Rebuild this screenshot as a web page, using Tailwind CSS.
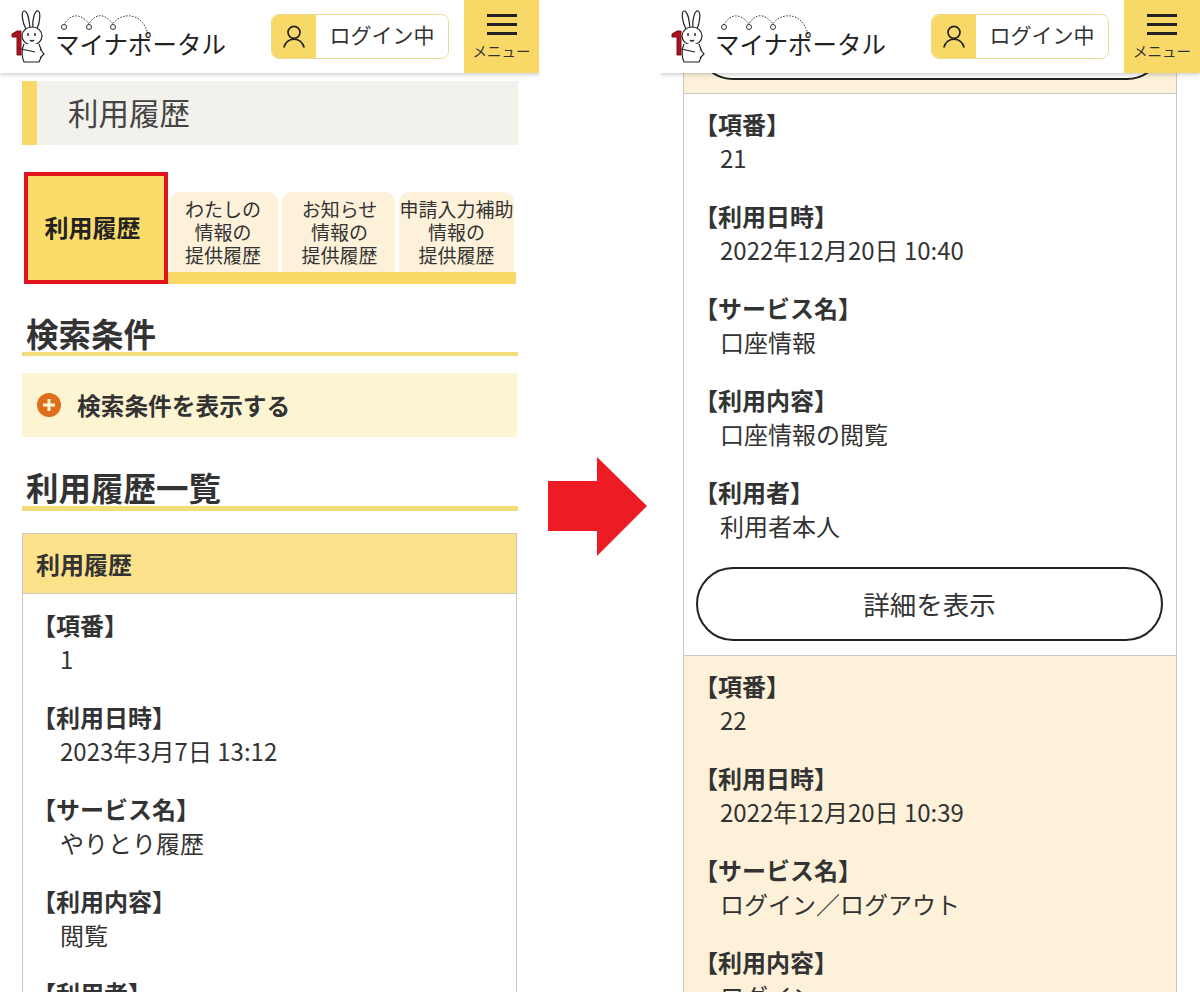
<!DOCTYPE html>
<html lang="ja">
<head>
  <meta charset="UTF-8">
  <title>マイナポータル 利用履歴</title>
  <meta name="viewport" content="width=device-width, initial-scale=1">
  <script src="https://cdn.jsdelivr.net/npm/@tailwindcss/browser@4"></script>
</head>
<body class="bg-white text-[#333] font-['Noto_Sans_CJK_JP','Noto_Sans',sans-serif]">
  <div class="flex h-[992px] w-[1200px] overflow-hidden">

    <!-- left phone -->
    <div class="w-[540px] h-[992px] shrink-0 flex flex-col overflow-hidden">
      <header class="relative z-10 h-[73px] shrink-0 flex bg-white shadow-[0_2px_4px_rgba(0,0,0,0.18)]">
        <svg class="ml-[10px] mt-[8px] shrink-0" width="38" height="56" viewBox="0 0 38 56" fill="#fff" stroke="#222" stroke-width="1.2">
          <path d="M16 21C12 14 11 3 14 3C18 3 19 11 20 20"/>
          <path d="M23 20C22 11 25 2 28 3C31 4 30 14 27 21"/>
          <ellipse cx="22" cy="28" rx="10" ry="9"/>
          <path d="M14 36C11 42 12 50 14 54L29 54C32 49 32 42 29 36"/>
          <path d="M11 41L25 44M30 41L34 46L30 50"/>
          <path d="M18 25V28M25 25V28" stroke-width="1.4"/>
          <path d="M20 32Q22 34 24 32" fill="none"/>
          <path d="M2 26L7 23L11 23L11 47L7 47L7 29L2 29Z" fill="#a8141f" stroke="#7a1018" stroke-width="1"/>
        </svg>
        <div class="relative w-[176px] ml-[9px] -translate-x-[2px] shrink-0">
          <svg class="absolute left-0 top-[14px]" width="100" height="30" viewBox="0 0 100 30" fill="none" stroke="#333">
            <path d="M9 11C15 -1 26 -1 34 10C40 -1 50 -1 58 10C64 -1 88 -4 93 21" stroke-dasharray="1.5 1.5"/>
            <circle cx="9" cy="13" r="2.5" fill="#fff"/>
            <circle cx="34" cy="13" r="2.5" fill="#fff"/>
            <circle cx="58" cy="13" r="2.5" fill="#fff"/>
          </svg>
          <div class="absolute left-0 top-[25px] text-[24.5px] leading-[38px] whitespace-nowrap text-[#222]">マイナポータル</div>
        </div>
        <div class="ml-[38px] mt-[14px] flex h-[45px] w-[178px] overflow-hidden rounded-[8px] border border-[#e6db8e] shrink-0">
          <div class="w-[44px] flex items-center justify-center bg-[#f8d968]">
            <svg width="24" height="25" viewBox="0 0 26 26" fill="none" stroke="#222" stroke-width="1.8">
              <circle cx="13" cy="8.5" r="6.5"/>
              <path d="M2 25C4 18 8 16 13 16C18 16 22 18 24 25"/>
            </svg>
          </div>
          <div class="flex-1 flex items-center justify-center bg-white pb-[3px] text-[21px] text-[#333]">ログイン中</div>
        </div>
        <div class="ml-[15px] w-[75px] flex flex-col items-center bg-[#f8d968] shrink-0">
          <div class="mt-[14px] h-[3px] w-[30px] bg-[#222]"></div>
          <div class="mt-[6px] h-[3px] w-[30px] bg-[#222]"></div>
          <div class="mt-[6px] h-[3px] w-[30px] bg-[#222]"></div>
          <div class="mt-[7px] text-[14.5px] leading-[18px] whitespace-nowrap">メニュー</div>
        </div>
      </header>

      <main class="px-[22px] w-[540px]">
        <div class="mt-[8px] h-[64px] flex bg-[#f2f1eb]">
          <div class="w-[15px] bg-[#f8d968]"></div>
          <h1 class="ml-[31px] text-[30.5px] leading-[62px] text-[#444]">利用履歴</h1>
        </div>

        <div class="mt-[27px] ml-[2px] w-[492px] h-[112px] flex items-end relative">
          <div class="w-[144px] h-[112px] shrink-0 flex items-center justify-center border-[4px] border-[#e1141d] bg-[#fadc6a] pr-[7px] pb-[2px] text-[24px] font-bold text-[#222]">利用履歴</div>
          <div class="flex-1 flex flex-col h-[92px]">
            <div class="flex h-[80px] gap-[4px] pl-[2px]">
              <div class="w-[108px] pr-[2px] rounded-t-[10px] bg-[#fdf1da] text-center text-[19px] leading-[23px] pt-[5px]">わたしの<br>情報の<br>提供履歴</div>
              <div class="w-[113px] pl-[2px] rounded-t-[10px] bg-[#fdf1da] text-center text-[19px] leading-[23px] pt-[5px]">お知らせ<br>情報の<br>提供履歴</div>
              <div class="w-[115px] rounded-t-[10px] bg-[#fdf1da] text-center text-[19px] leading-[23px] pt-[5px] whitespace-nowrap">申請入力補助<br>情報の<br>提供履歴</div>
            </div>
            <div class="h-[12px] bg-[#f8d968]"></div>
          </div>
        </div>

        <h2 class="mt-[29px] pl-[4px] text-[32.5px] leading-[39px] font-bold text-[#333] border-b-[4px] border-[#f3dc7a]">検索条件</h2>
        <div class="mt-[17px] h-[64px] w-[495px] flex items-center bg-[#fdf5d2] pl-[15px]">
          <div class="w-[24px] h-[24px] rounded-full bg-[#de6e1c] flex items-center justify-center">
            <svg width="12" height="12" viewBox="0 0 12 12" stroke="#fdf5d2" stroke-width="3"><path d="M6 0V12M0 6H12"/></svg>
          </div>
          <span class="ml-[16px] pt-[2px] text-[23.7px] font-bold text-[#333]">検索条件を表示する</span>
        </div>

        <h2 class="mt-[30px] pl-[4px] text-[32.5px] leading-[39px] font-bold text-[#333] border-b-[5px] border-[#f3dc7a]">利用履歴一覧</h2>

        <div class="mt-[22px] w-[495px] border border-[#c8c8c0] bg-white">
          <div class="h-[60px] pl-[13px] flex items-center bg-[#fde28c] border-b border-[#c8c8c0] text-[24px] font-bold text-[#333]">利用履歴</div>
          <div class="pl-[9px] pt-[14px]">
            <div class="mb-[24px]">
              <div class="text-[24px] leading-[34px] font-bold">【項番】</div>
              <div class="pl-[28px] text-[24px] leading-[34px]">1</div>
            </div>
            <div class="mb-[24px]">
              <div class="text-[24px] leading-[34px] font-bold">【利用日時】</div>
              <div class="pl-[28px] text-[24px] leading-[34px]">2023年3月7日 13:12</div>
            </div>
            <div class="mb-[24px]">
              <div class="text-[24px] leading-[34px] font-bold">【サービス名】</div>
              <div class="pl-[28px] text-[24px] leading-[34px]">やりとり履歴</div>
            </div>
            <div class="mb-[24px]">
              <div class="text-[24px] leading-[34px] font-bold">【利用内容】</div>
              <div class="pl-[28px] text-[24px] leading-[34px]">閲覧</div>
            </div>
            <div class="text-[24px] leading-[34px] font-bold">【利用者】</div>
          </div>
        </div>
      </main>
    </div>

    <!-- arrow -->
    <div class="w-[120px] shrink-0">
      <svg class="mt-[457px] ml-[8px]" width="99" height="99" viewBox="0 0 99 99" fill="#ed1c24"><path d="M0 24H49V0L99 49L49 99V74H0Z"/></svg>
    </div>

    <!-- right phone -->
    <div class="w-[540px] h-[992px] shrink-0 flex flex-col overflow-hidden">
      <header class="relative z-10 h-[73px] shrink-0 flex bg-white shadow-[0_2px_4px_rgba(0,0,0,0.18)]">
        <svg class="ml-[10px] mt-[8px] shrink-0" width="38" height="56" viewBox="0 0 38 56" fill="#fff" stroke="#222" stroke-width="1.2">
          <path d="M16 21C12 14 11 3 14 3C18 3 19 11 20 20"/>
          <path d="M23 20C22 11 25 2 28 3C31 4 30 14 27 21"/>
          <ellipse cx="22" cy="28" rx="10" ry="9"/>
          <path d="M14 36C11 42 12 50 14 54L29 54C32 49 32 42 29 36"/>
          <path d="M11 41L25 44M30 41L34 46L30 50"/>
          <path d="M18 25V28M25 25V28" stroke-width="1.4"/>
          <path d="M20 32Q22 34 24 32" fill="none"/>
          <path d="M2 26L7 23L11 23L11 47L7 47L7 29L2 29Z" fill="#a8141f" stroke="#7a1018" stroke-width="1"/>
        </svg>
        <div class="relative w-[176px] ml-[9px] -translate-x-[2px] shrink-0">
          <svg class="absolute left-0 top-[14px]" width="100" height="30" viewBox="0 0 100 30" fill="none" stroke="#333">
            <path d="M9 11C15 -1 26 -1 34 10C40 -1 50 -1 58 10C64 -1 88 -4 93 21" stroke-dasharray="1.5 1.5"/>
            <circle cx="9" cy="13" r="2.5" fill="#fff"/>
            <circle cx="34" cy="13" r="2.5" fill="#fff"/>
            <circle cx="58" cy="13" r="2.5" fill="#fff"/>
          </svg>
          <div class="absolute left-0 top-[25px] text-[24.5px] leading-[38px] whitespace-nowrap text-[#222]">マイナポータル</div>
        </div>
        <div class="ml-[38px] mt-[14px] flex h-[45px] w-[178px] overflow-hidden rounded-[8px] border border-[#e6db8e] shrink-0">
          <div class="w-[44px] flex items-center justify-center bg-[#f8d968]">
            <svg width="24" height="25" viewBox="0 0 26 26" fill="none" stroke="#222" stroke-width="1.8">
              <circle cx="13" cy="8.5" r="6.5"/>
              <path d="M2 25C4 18 8 16 13 16C18 16 22 18 24 25"/>
            </svg>
          </div>
          <div class="flex-1 flex items-center justify-center bg-white pb-[3px] text-[21px] text-[#333]">ログイン中</div>
        </div>
        <div class="ml-[15px] w-[76px] flex flex-col items-center bg-[#f8d968] shrink-0">
          <div class="mt-[14px] h-[3px] w-[30px] bg-[#222]"></div>
          <div class="mt-[6px] h-[3px] w-[30px] bg-[#222]"></div>
          <div class="mt-[6px] h-[3px] w-[30px] bg-[#222]"></div>
          <div class="mt-[7px] text-[14.5px] leading-[18px] whitespace-nowrap">メニュー</div>
        </div>
      </header>

      <main class="ml-[23px] w-[494px] border-x border-[#c8c8c0] bg-white">
        <div class="h-[21px] overflow-hidden bg-[#fdf1da] border-b border-[#c8c8c0]">
          <div class="mx-[12px] -mt-[67px] h-[74px] rounded-[37px] border-[2px] border-[#222] bg-white"></div>
        </div>
        <div class="h-[562px] pl-[10px] pt-[13px] bg-white border-b border-[#c8c8c0]">
          <div class="mb-[24px]">
            <div class="text-[24px] leading-[34px] font-bold">【項番】</div>
            <div class="pl-[26px] text-[24px] leading-[34px]">21</div>
          </div>
          <div class="mb-[24px]">
            <div class="text-[24px] leading-[34px] font-bold">【利用日時】</div>
            <div class="pl-[26px] text-[24px] leading-[34px]">2022年12月20日 10:40</div>
          </div>
          <div class="mb-[24px]">
            <div class="text-[24px] leading-[34px] font-bold">【サービス名】</div>
            <div class="pl-[26px] text-[24px] leading-[34px]">口座情報</div>
          </div>
          <div class="mb-[24px]">
            <div class="text-[24px] leading-[34px] font-bold">【利用内容】</div>
            <div class="pl-[26px] text-[24px] leading-[34px]">口座情報の閲覧</div>
          </div>
          <div class="mb-[24px]">
            <div class="text-[24px] leading-[34px] font-bold">【利用者】</div>
            <div class="pl-[26px] text-[24px] leading-[34px]">利用者本人</div>
          </div>
          <button class="ml-[2px] mt-[2px] block w-[467px] h-[74px] rounded-[37px] border-[2px] border-[#222] bg-white text-[26.5px] text-[#333]">詳細を表示</button>
        </div>
        <div class="pl-[10px] pt-[13px] bg-[#fdf1da] h-[340px]">
          <div class="mb-[24px]">
            <div class="text-[24px] leading-[34px] font-bold">【項番】</div>
            <div class="pl-[26px] text-[24px] leading-[34px]">22</div>
          </div>
          <div class="mb-[24px]">
            <div class="text-[24px] leading-[34px] font-bold">【利用日時】</div>
            <div class="pl-[26px] text-[24px] leading-[34px]">2022年12月20日 10:39</div>
          </div>
          <div class="mb-[24px]">
            <div class="text-[24px] leading-[34px] font-bold">【サービス名】</div>
            <div class="pl-[26px] text-[24px] leading-[34px]">ログイン／ログアウト</div>
          </div>
          <div class="mb-[24px]">
            <div class="text-[24px] leading-[34px] font-bold">【利用内容】</div>
            <div class="pl-[26px] text-[24px] leading-[34px]">ログイン</div>
          </div>
        </div>
      </main>
    </div>

  </div>
</body>
</html>
